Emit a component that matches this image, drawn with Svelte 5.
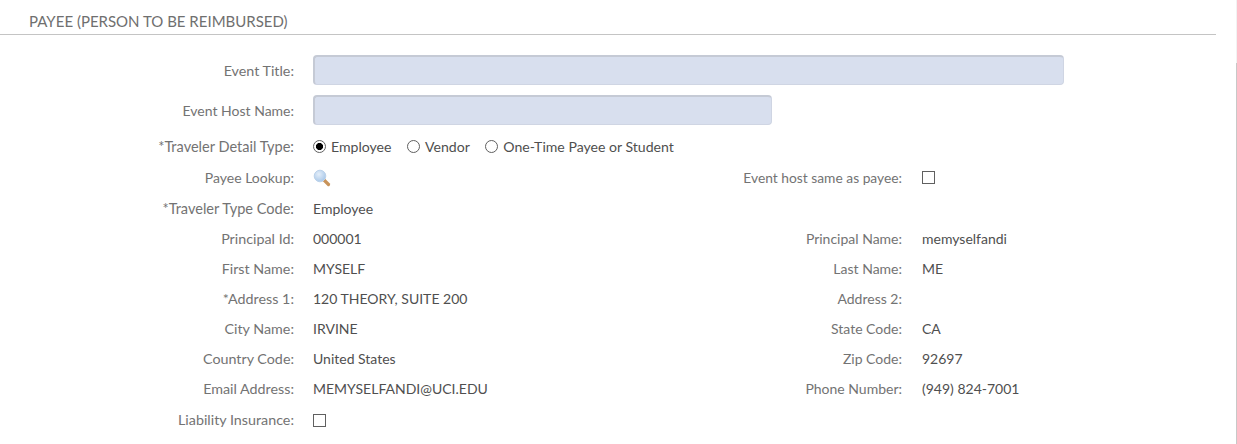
<script lang="ts">
  const rows = [
    { left: 'Principal Id:', lv: '000001', right: 'Principal Name:', rv: 'memyselfandi' },
    { left: 'First Name:', lv: 'MYSELF', right: 'Last Name:', rv: 'ME' },
    { left: '*Address 1:', lv: '120 THEORY, SUITE 200', right: 'Address 2:', rv: '' },
    { left: 'City Name:', lv: 'IRVINE', right: 'State Code:', rv: 'CA' },
    { left: 'Country Code:', lv: 'United States', right: 'Zip Code:', rv: '92697' },
    { left: 'Email Address:', lv: 'MEMYSELFANDI@UCI.EDU', right: 'Phone Number:', rv: '(949) 824-7001' },
  ];
  const detailTypes = ['Employee', 'Vendor', 'One-Time Payee or Student'];
  let detailType = $state('Employee');
</script>

<div class="page">
  <h2 class="heading">PAYEE (PERSON TO BE REIMBURSED)</h2>

  <form class="form">
    <div class="row tall">
      <label class="lbl" for="event-title">Event Title:</label>
      <input id="event-title" class="field wide" type="text" />
    </div>
    <div class="row tall">
      <label class="lbl narrow" for="host-name">Event Host Name:</label>
      <input id="host-name" class="field mid" type="text" />
    </div>

    <div class="row radios-row">
      <span class="lbl req">*Traveler Detail Type:</span>
      <div class="radios">
        {#each detailTypes as t}
          <label class="radio">
            <input type="radio" name="detail" value={t} bind:group={detailType} />
            <span>{t}</span>
          </label>
        {/each}
      </div>
    </div>

    <div class="row lookup-row">
      <span class="lbl narrow">Payee Lookup:</span>
      <span class="val">
        <svg class="glass" width="18" height="18" viewBox="0 0 18 18" aria-hidden="true">
          <defs>
            <radialGradient id="lens" cx="40%" cy="35%" r="70%">
              <stop offset="0" stop-color="#e4eef9" />
              <stop offset="1" stop-color="#a6c6e8" />
            </radialGradient>
          </defs>
          <path d="M10.5 10.5 L15.5 15.5" stroke="#c8935a" stroke-width="3.2" stroke-linecap="round" />
          <circle cx="7" cy="7" r="5.8" fill="url(#lens)" stroke="#bcd2ea" stroke-width="1" />
        </svg>
      </span>
      <span class="lbl right-lbl host">Event host same as payee:</span>
      <span class="val"><input class="check host-check" type="checkbox" /></span>
    </div>

    <div class="row type-row">
      <span class="lbl req">*Traveler Type Code:</span>
      <span class="val">Employee</span>
    </div>

    {#each rows as r}
      <div class="row plain">
        <span class="lbl">{r.left}</span>
        <span class="val">{r.lv}</span>
        <span class="lbl right-lbl">{r.right}</span>
        <span class="val">{r.rv}</span>
      </div>
    {/each}

    <div class="row insurance">
      <span class="lbl">Liability Insurance:</span>
      <span class="val"><input class="check" type="checkbox" /></span>
    </div>
  </form>
</div>

<style>
  :global(body) {
    margin: 0;
    background: #fff;
  }
  .page {
    height: 444px;
    overflow: hidden;
    box-sizing: border-box;
    background: linear-gradient(#f2f2f2 63px, #c8c8c8 63px) right top / 1px 100% no-repeat;
    font-family: Lato, "Open Sans", sans-serif;
    font-size: 14px;
    color: #4f4f4f;
  }
  .heading {
    width: 1216px;
    box-sizing: border-box;
    height: 35px;
    margin: 0;
    padding: 12px 0 0 29px;
    border-bottom: 1px solid #c4c4c4;
    font-size: 15px;
    line-height: 18px;
    font-weight: 400;
    color: #6f6f6f;
  }
  .form {
    padding-top: 20px;
  }
  .row {
    display: grid;
    grid-template-columns: 294px 295px 275px auto;
    column-gap: 19px;
    align-items: center;
    line-height: 18px;
  }
  .lbl, .val { padding-top: 2px; }
  .tall { height: 30px; margin-bottom: 10px; }
  .radios-row { height: 23px; }
  .radios-row .lbl { padding-top: 0; }
  .lookup-row { height: 30px; margin-top: 4px; }
  .type-row { height: 30px; margin-top: 1px; }
  .plain { height: 30px; }
  .insurance { height: 32px; }
  .lbl {
    text-align: right;
    font-size: 14.3px;
    color: #737373;
  }
  .req { font-size: 14.55px; }
  .narrow { font-size: 14px; }
  .right-lbl { font-size: 14px; }
  .host { font-size: 13.8px; }
  .val {
    display: flex;
    align-items: center;
    white-space: nowrap;
  }
  .plain .val:last-child { margin-left: 1px; }
  .field {
    height: 30px;
    box-sizing: border-box;
    margin: 0;
    background: #d8dfee;
    border: 1px solid #cfd5e3;
    border-top: 2px solid #c5cad5;
    border-left: 2px solid #c5cad5;
    border-radius: 4px;
    grid-column: 2 / -1;
  }
  .wide { width: 751px; }
  .mid { width: 459px; }
  .radios {
    display: flex;
    gap: 15.5px;
    grid-column: 2 / -1;
    font-size: 14.1px;
  }
  .radio {
    display: flex;
    align-items: center;
    gap: 5px;
  }
  .radio input {
    appearance: none;
    box-sizing: border-box;
    margin: 0;
    width: 13px;
    height: 13px;
    border: 1px solid #5f5f5f;
    border-radius: 50%;
    background: #fff;
  }
  .radio input:checked {
    background: radial-gradient(circle, #000 0 3.2px, #fff 3.9px);
  }
  .check {
    appearance: none;
    width: 13px;
    height: 13px;
    margin: 0;
    background: #fff;
    border: 1px solid #606060;
  }
  .host-check { margin-top: -2px; }
  .lookup-row .val:last-child { margin-left: 1px; }
</style>
